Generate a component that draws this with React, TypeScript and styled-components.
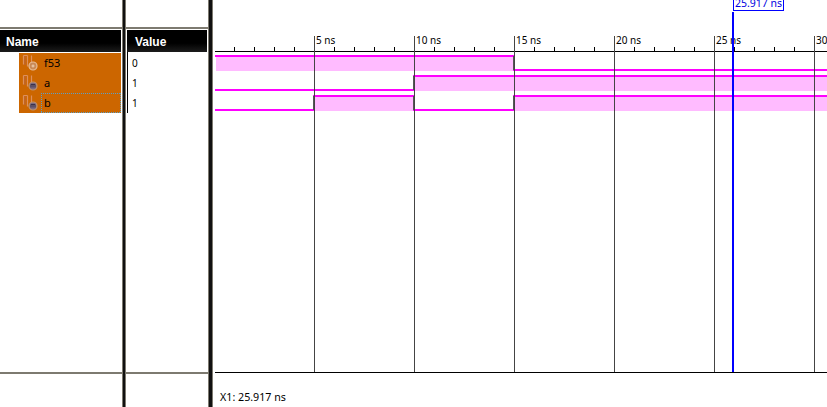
import React from 'react';
import styled, { createGlobalStyle } from 'styled-components';

const GlobalStyle = createGlobalStyle`
  html, body {
    margin: 0;
    padding: 0;
    width: 827px;
    height: 407px;
    overflow: hidden;
    background: #fff;
    font-family: "Noto Sans", "Liberation Sans", sans-serif;
  }
`;

const signals = [
  { name: 'f53', value: '0', kind: 'plus' },
  { name: 'a', value: '1', kind: 'm' },
  { name: 'b', value: '1', kind: 'm', focused: true },
];

const majors = [
  { x: 99, label: '5 ns' },
  { x: 199, label: '10 ns' },
  { x: 299, label: '15 ns' },
  { x: 399, label: '20 ns' },
  { x: 499, label: '25 ns' },
  { x: 599, label: '30 ns' },
];

const minorTicks = Array.from({ length: 31 }, (_, i) => i * 20 - 1).filter(
  (x) => x > 0 && (x + 1) % 100 !== 0
);

const PINK = '#ff00ff';
const FILL = '#ffbbff';

// [x1, x2] spans where the signal is high
const waves = [
  { high: 55, low: 69, spans: [[1, 299]] },
  { high: 75, low: 89, spans: [[199, 612]] },
  { high: 95, low: 109, spans: [[99, 199], [299, 612]] },
];

const Page = styled.div`
  display: flex;
  width: 827px;
  height: 407px;
  background: #fff;
`;

const Pane = styled.div<{ $width: number }>`
  width: ${({ $width }) => $width}px;
  flex: none;
  display: flex;
  flex-direction: column;
`;

const TopGap = styled.div`
  height: 27px;
  flex: none;
  border-bottom: 2px solid #7d7a70;
`;

const HeaderCell = styled.div<{ $indent: number }>`
  height: 22px;
  flex: none;
  margin: 1px 1px 0 ${({ $indent }) => ($indent ? 1 : 0)}px;
  padding-left: ${({ $indent }) => $indent || 6}px;
  background: linear-gradient(#000 0, #000 60%, #1c1c1c 100%);
  color: #fff;
  font: bold 12px/25px "Liberation Sans", sans-serif;
`;

const Body = styled.div`
  flex: 1;
  padding-top: 1px;
`;

const Footer = styled.div`
  height: 33px;
  flex: none;
  border-top: 2px solid #7d7a70;
`;

const NameList = styled.div`
  margin-left: 19px;
  width: 102px;
  height: 60px;
  background: #cc6600;
`;

const NameRow = styled.div`
  height: 20px;
  display: flex;
  align-items: stretch;
  font-size: 11px;
  color: #000;
`;

const DOT = '#5aa0c8';
const dots = (dir: string) =>
  `repeating-linear-gradient(${dir}, ${DOT} 0 1px, transparent 1px 2px)`;

const NameLabel = styled.span<{ $focused?: boolean }>`
  flex: 1;
  display: flex;
  align-items: center;
  padding: 0 0 2px 3px;
  ${({ $focused }) =>
    $focused &&
    `
    background-image: ${dots('to right')}, ${dots('to right')}, ${dots('to bottom')}, ${dots('to bottom')};
    background-size: 100% 1px, 100% 1px, 1px 100%, 1px 100%;
    background-position: 0 0, 0 100%, 0 0, 100% 0;
    background-repeat: no-repeat;
  `}
`;

const ValueList = styled.div`
  margin-left: 1px;
  margin-top: -1px;
  height: 61px;
  border-left: 1px solid #000;
  padding-top: 1px;
  box-sizing: border-box;
`;

const ValueRow = styled.div`
  height: 20px;
  line-height: 20px;
  padding-left: 4px;
  font-size: 10px;
  color: #000;
`;

const Splitter = styled.div<{ $width: number }>`
  width: ${({ $width }) => $width}px;
  flex: none;
  background: #111;
  border-left: 1px solid #7d7a70;
  border-right: 1px solid #7d7a70;
  box-sizing: border-box;
`;

const WavePane = styled.div`
  position: relative;
  flex: 1;
  display: flex;
  flex-direction: column;
  padding-left: 2px;
`;

const WaveSvg = styled.svg`
  display: block;
  flex: none;
`;

const RulerLabel = styled.text`
  font-family: "Noto Sans", "Liberation Sans", sans-serif;
  font-size: 10px;
  fill: #000;
`;

const Readout = styled.div`
  padding: 17px 0 0 5px;
  font-size: 10.7px;
  line-height: 15px;
  color: #000;
`;

const CursorFlag = styled.div`
  position: absolute;
  left: 520px;
  top: -4px;
  width: 51px;
  height: 15px;
  box-sizing: border-box;
  border: 1px solid #0000ff;
  background: #fff;
  color: #0000e0;
  font-size: 10.5px;
  line-height: 13px;
  text-align: center;
`;

const SignalIcon = ({ kind }: { kind: string }) => (
  <svg width="22" height="20" viewBox="0 0 22 20" style={{ flex: 'none' }}>
    <path
      d="M4.5 2.5v9M8.5 2.5v11M12.5 2.5v7M4.5 2.5h4"
      stroke="#dd8f5c"
      strokeWidth="1.2"
      fill="none"
    />
    <path d="M6 3v9" stroke="#b9623a" strokeWidth="1" fill="none" />
    <circle
      cx="14"
      cy="13"
      r="4"
      fill={kind === 'plus' ? '#c98a58' : '#7d6a7e'}
      stroke={kind === 'plus' ? '#e8bd96' : '#c49468'}
      strokeWidth="1.2"
    />
    {kind === 'plus' ? (
      <path d="M12.5 13h3M14 11.5v3" stroke="#f0d2b4" strokeWidth="1" />
    ) : (
      <path d="M12 14.5v-3h4v3M14 11.5v3" stroke="#2f2840" strokeWidth="0.8" fill="none" />
    )}
  </svg>
);

const Waveform = () => (
  <WaveSvg width="612" height="373" viewBox="0 0 612 373" shapeRendering="crispEdges">
    {waves.map((w, i) => (
      <g key={i}>
        {w.spans.map(([a, b]) => (
          <rect key={a} x={a} y={w.high + 2} width={b - a} height={w.low - w.high} fill={FILL} />
        ))}
      </g>
    ))}
    <path
      d={
        'M0 56H299V70H612' +
        'M0 90H199V76H612' +
        'M0 110H99V96H199V110H299V96H612'
      }
      fill="none"
      stroke={PINK}
      strokeWidth="2"
      strokeLinejoin="miter"
    />
    {/* edges are drawn dark on top of the pink */}
    <path
      d="M298.5 56V70M198.5 76V90M98.5 96V110M198.5 96V110M298.5 96V110"
      stroke="#555"
      strokeWidth="1"
    />
    <rect x="0" y="51" width="612" height="1" fill="#000" />
    {minorTicks.map((x) => (
      <rect key={x} x={x} y="47" width="1" height="4" fill="#000" />
    ))}
    {majors.map((m) => (
      <g key={m.x}>
        <rect x={m.x} y="36" width="1" height="336" fill="#444" />
        <RulerLabel x={m.x + 2} y="44">
          {m.label}
        </RulerLabel>
      </g>
    ))}
    <rect x="517" y="12" width="2" height="360" fill="#0000ff" />
    <rect x="0" y="372" width="612" height="1" fill="#000" />
  </WaveSvg>
);

export default function App() {
  return (
    <Page>
      <GlobalStyle />
      <Pane $width={122}>
        <TopGap />
        <HeaderCell $indent={0}>Name</HeaderCell>
        <Body>
          <NameList>
            {signals.map((s) => (
              <NameRow key={s.name}>
                <SignalIcon kind={s.kind} />
                <NameLabel $focused={s.focused}>{s.name}</NameLabel>
              </NameRow>
            ))}
          </NameList>
        </Body>
        <Footer />
      </Pane>
      <Splitter $width={4} />
      <Pane $width={82}>
        <TopGap />
        <HeaderCell $indent={8}>Value</HeaderCell>
        <Body>
          <ValueList>
            {signals.map((s) => (
              <ValueRow key={s.name}>{s.value}</ValueRow>
            ))}
          </ValueList>
        </Body>
        <Footer />
      </Pane>
      <Splitter $width={5} />
      <WavePane>
        <Waveform />
        <CursorFlag>25.917 ns</CursorFlag>
        <Readout>X1: 25.917 ns</Readout>
      </WavePane>
    </Page>
  );
}
